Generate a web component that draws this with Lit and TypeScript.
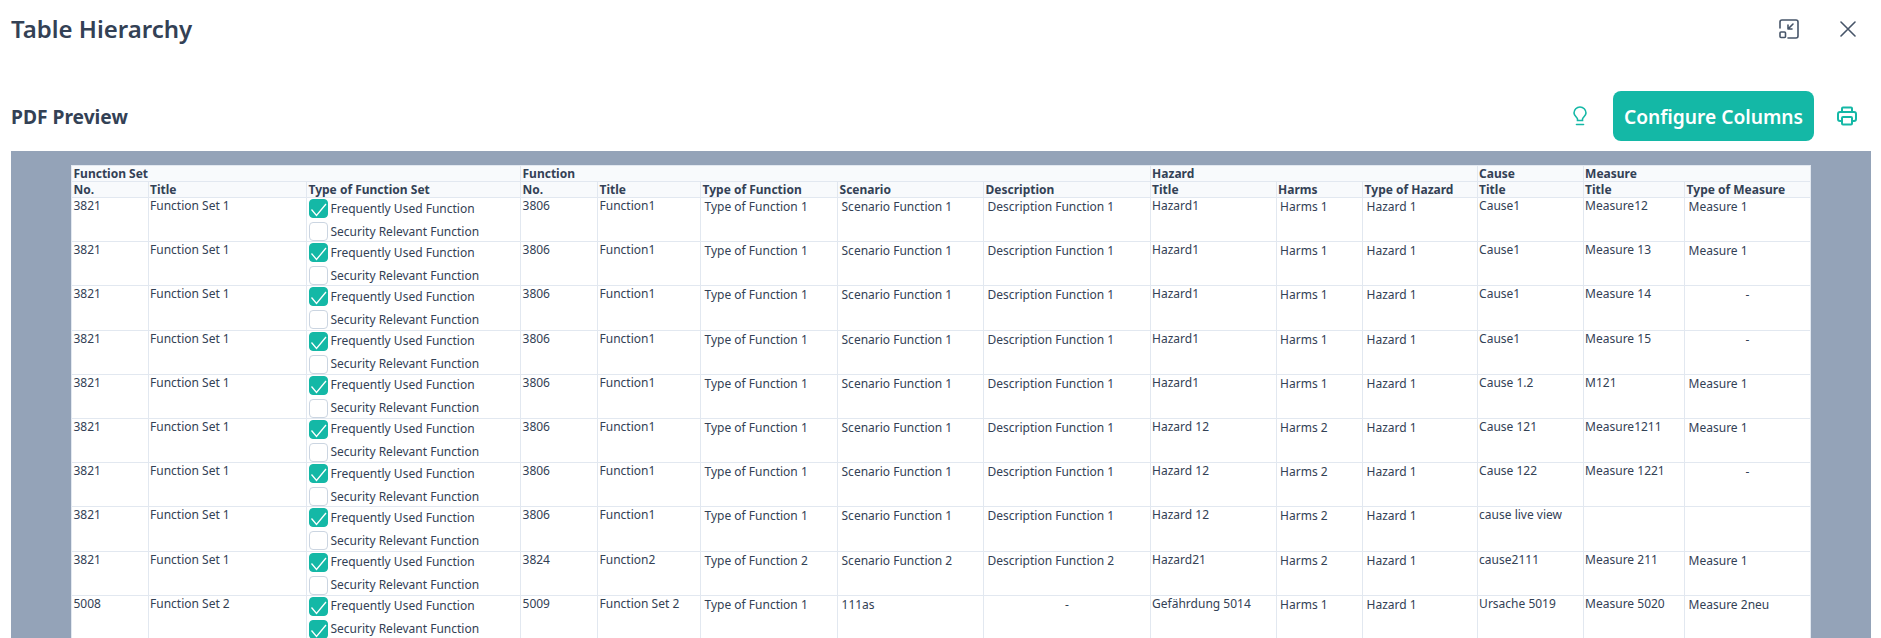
import { LitElement, html, css, nothing } from "lit";
import { customElement } from "lit/decorators.js";

const FU = "Frequently Used Function";
const SR = "Security Relevant Function";
type Row = { no: string; set: string; sec?: boolean; fno: string; fn: string; type: string; sc: string; desc: string; hz: string; harm: string; ht: string; cause: string; m: string; mt: string };
const base = { no: "3821", set: "Function Set 1", fno: "3806", fn: "Function1", type: "Type of Function 1", sc: "Scenario Function 1", desc: "Description Function 1", ht: "Hazard 1" };
const rows: Row[] = [
  { ...base, hz: "Hazard1", harm: "Harms 1", cause: "Cause1", m: "Measure12", mt: "Measure 1" },
  { ...base, hz: "Hazard1", harm: "Harms 1", cause: "Cause1", m: "Measure 13", mt: "Measure 1" },
  { ...base, hz: "Hazard1", harm: "Harms 1", cause: "Cause1", m: "Measure 14", mt: "-" },
  { ...base, hz: "Hazard1", harm: "Harms 1", cause: "Cause1", m: "Measure 15", mt: "-" },
  { ...base, hz: "Hazard1", harm: "Harms 1", cause: "Cause 1.2", m: "M121", mt: "Measure 1" },
  { ...base, hz: "Hazard 12", harm: "Harms 2", cause: "Cause 121", m: "Measure1211", mt: "Measure 1" },
  { ...base, hz: "Hazard 12", harm: "Harms 2", cause: "Cause 122", m: "Measure 1221", mt: "-" },
  { ...base, hz: "Hazard 12", harm: "Harms 2", cause: "cause live view", m: "", mt: "" },
  { ...base, fno: "3824", fn: "Function2", type: "Type of Function 2", sc: "Scenario Function 2", desc: "Description Function 2", hz: "Hazard21", harm: "Harms 2", cause: "cause2111", m: "Measure 211", mt: "Measure 1" },
  { no: "5008", set: "Function Set 2", sec: true, fno: "5009", fn: "Function Set 2", type: "Type of Function 1", sc: "111as", desc: "-", hz: "Gefährdung 5014", harm: "Harms 1", ht: "Hazard 1", cause: "Ursache 5019", m: "Measure 5020", mt: "Measure 2neu" },
];
const widths = [76.5, 158.5, 214, 77, 103, 137, 146, 166.5, 126, 86.5, 114.5, 106, 101.5, 125.5];

@customElement("app-root")
export class AppRoot extends LitElement {
  static styles = css`
    :host { display: block; height: 638px; overflow: hidden; background: #fff; font-family: "Noto Sans", sans-serif; color: #334155; }
    .top { display: flex; align-items: center; justify-content: space-between; height: 57px; padding: 0 25px 0 11px; }
    h1 { margin: 0; font-size: 24px; line-height: 32px; font-weight: 600; }
    .top-icons { display: flex; align-items: center; gap: 41px; }
    svg { display: block; }
    .bar { display: flex; align-items: center; justify-content: space-between; height: 50px; margin-top: 34px; padding: 0 24px 0 11px; }
    h2 { margin: 2px 0 0; font-size: 19.2px; line-height: 28px; font-weight: 700; }
    .actions { display: flex; align-items: center; }
    .btn { height: 50px; width: 201px; margin: 0 23px 0 26px; border: 0; border-radius: 8px; background: #14b8a6; color: #fff; font: 600 19.2px "Noto Sans", sans-serif; padding: 0; }
    .viewer { margin: 10px 10px 0 11px; height: 487px; background: #94a3b8; padding: 14px 60px 0; overflow: hidden; }
    table { width: 1738.5px; table-layout: fixed; border-collapse: collapse; background: #fff; font-size: 12px; line-height: 16px; }
    th, td { border: 1px solid #e2e8f0; padding: 0 0 0 1.5px; text-align: left; vertical-align: top; white-space: nowrap; overflow: hidden; }
    th { background: #f8fafc; font-weight: 700; height: 15px; line-height: 15px; }
    tr.r { height: 44.2px; }
    td { font-weight: 400; }
    td.checks { padding-top: 1px; }
    .pad { padding: 1px 0 0 3.5px; }
    td.dash { text-align: center; padding-left: 0; }
    .chk { display: flex; align-items: center; gap: 3px; height: 19px; }
    .chk + .chk { margin-top: 4px; }
    .box { width: 19px; height: 19px; box-sizing: border-box; border: 1px solid #cbd5e1; border-radius: 4px; background: #fff; flex: none; }
    .box.on { background: #14b8a6; border-color: #14b8a6; }
  `;
  private chk(label: string, on: boolean) {
    return html`<div class="chk"><span class="box ${on ? "on" : ""}">${on
      ? html`<svg width="17" height="17" viewBox="0 0 17 17" fill="none" stroke="#fff" stroke-width="1.3"><path d="M1.500 9.500l5 6L16 4"/></svg>`
      : nothing}</span>${label}</div>`;
  }
  render() {
    return html`
      <div class="top">
        <h1>Table Hierarchy</h1>
        <div class="top-icons">
          <svg width="20" height="20" viewBox="0 0 20 20" fill="none" stroke="#475569" stroke-width="1.6" stroke-linecap="round" stroke-linejoin="round"><path d="M1 9V3a2 2 0 0 1 2-2h14a2 2 0 0 1 2 2v14a2 2 0 0 1-2 2H9"/><rect x="1" y="13" width="5.500" height="5.500" rx="1"/><path d="M14 5l-5 5M9 6v4h4"/></svg>
          <svg width="16" height="16" viewBox="0 0 16 16" fill="none" stroke="#475569" stroke-width="1.6" stroke-linecap="round"><path d="M1 1l14 14M15 1L1 15"/></svg>
        </div>
      </div>
      <div class="bar">
        <h2>PDF Preview</h2>
        <div class="actions">
          <svg width="14" height="20" viewBox="0 0 14 20" fill="none" stroke="#14b8a6" stroke-width="1.6" stroke-linecap="round"><path d="M4.500 14.500v-1.500C4.500 11.500 1 10 1 7a6 6 0 0 1 12 0c0 3-3.500 4.500-3.500 6v1.500z"/><path d="M3.500 18.500h7"/></svg>
          <button class="btn">Configure Columns</button>
          <svg width="20" height="20" viewBox="0 0 20 20" fill="none" stroke="#14b8a6" stroke-width="2" stroke-linejoin="round"><path d="M5 6V2.500a1 1 0 0 1 1-1h8a1 1 0 0 1 1 1V6"/><path d="M5 15H3a2 2 0 0 1-2-2V8a2 2 0 0 1 2-2h14a2 2 0 0 1 2 2v5a2 2 0 0 1-2 2h-2"/><rect x="5" y="11" width="10" height="7.500" rx="1"/></svg>
        </div>
      </div>
      <div class="viewer">
        <table>
          <colgroup>${widths.map((w) => html`<col style="width:${w}px" />`)}</colgroup>
          <thead>
            <tr><th colspan="3">Function Set</th><th colspan="5">Function</th><th colspan="3">Hazard</th><th>Cause</th><th colspan="2">Measure</th></tr>
            <tr>${["No.", "Title", "Type of Function Set", "No.", "Title", "Type of Function", "Scenario", "Description", "Title", "Harms", "Type of Hazard", "Title", "Title", "Type of Measure"].map((h) => html`<th>${h}</th>`)}</tr>
          </thead>
          <tbody>
            ${rows.map((r) => html`<tr class="r">
              <td>${r.no}</td><td>${r.set}</td>
              <td class="checks">${this.chk(FU, true)}${this.chk(SR, !!r.sec)}</td>
              <td>${r.fno}</td><td>${r.fn}</td>
              <td class="pad">${r.type}</td><td class="pad">${r.sc}</td>
              <td class="pad ${r.desc === "-" ? "dash" : ""}">${r.desc}</td>
              <td>${r.hz}</td>
              <td class="pad">${r.harm}</td><td class="pad">${r.ht}</td>
              <td>${r.cause}</td><td>${r.m}</td>
              <td class="pad ${r.mt === "-" ? "dash" : ""}">${r.mt}</td>
            </tr>`)}
          </tbody>
        </table>
      </div>
    `;
  }
}
